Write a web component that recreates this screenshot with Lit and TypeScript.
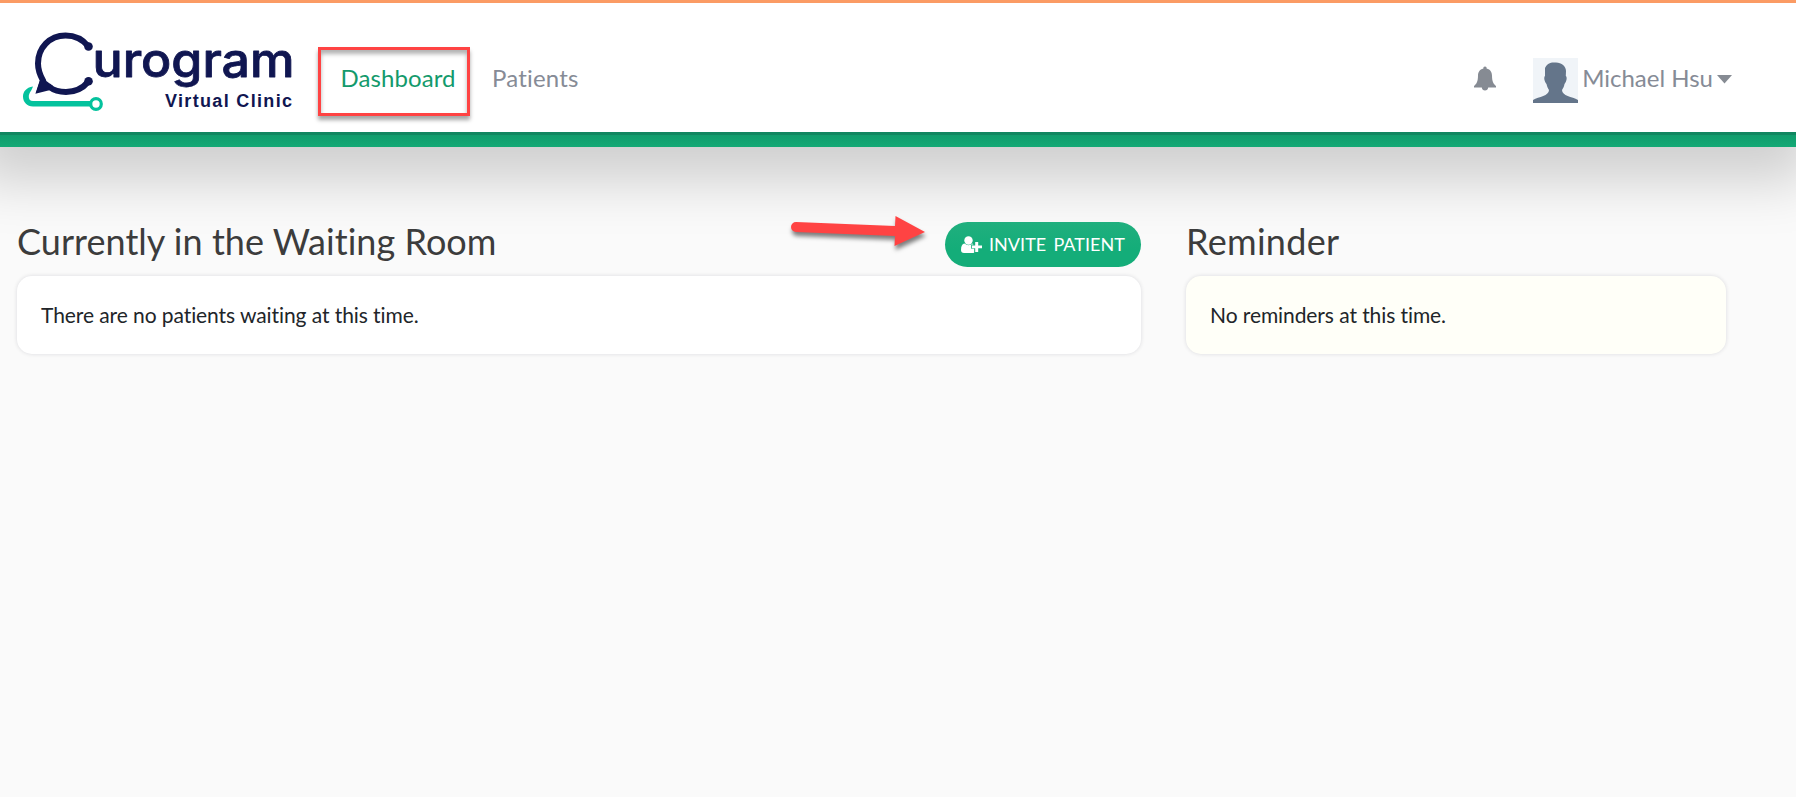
import { LitElement, css, html, svg } from "lit";
import { customElement, property } from "lit/decorators.js";

const logo = svg`
  <svg class="logo" width="280" height="90" viewBox="16 26 280 90">
    <path
      d="M88.500 46.500 C82.500 39 74 35.500 65.500 35.500 C49.500 35.500 38 48 38 63.500 C38 70.500 40.500 76 43 80.500 L40 89.500 L49.500 87 C54 90.500 60 92 66 92 C75 92 83 88 88.500 81.500"
      class="bubble"
    />
    <circle cx="88.500" cy="46.500" r="4.300" class="navy" />
    <circle cx="88.500" cy="81.300" r="4.300" class="navy" />
    <path d="M36 93 L41 77 L53 86 Z" class="navy" />
    <path
      d="M33 86.500 C26 87.500 23 92 23 96.500 C23 102 27 106.500 33 106.500 H90 V101 H33 C30 101 28.500 99 28.800 96 C29 93 31.500 91 33 86.500 Z"
      class="mint"
    />
    <circle cx="96" cy="104" r="5.300" class="ring" />
    <text x="92.500" y="77.300" textLength="202" lengthAdjust="spacingAndGlyphs" class="word">urogram</text>
    <text x="165" y="106.500" textLength="127" class="sub">Virtual Clinic</text>
  </svg>
`;

@customElement("message-card")
export class MessageCard extends LitElement {
  @property() text = "";

  static styles = css`
    :host {
      display: flex;
      align-items: center;
      box-sizing: border-box;
      height: 78px;
      padding: 0 24px 2px;
      border-radius: 15px;
      background: var(--card-background, #fff);
      box-shadow: 0 0 4px rgba(0, 0, 40, 0.13);
      color: #212529;
      font-size: 21px;
      letter-spacing: -0.08px;
    }
  `;

  render() {
    return html`<span>${this.text}</span>`;
  }
}

@customElement("app-root")
export class AppRoot extends LitElement {
  static styles = css`
    :host {
      display: block;
      height: 797px;
      overflow: hidden;
      position: relative;
      background: #fafafa;
      font-family: Lato, sans-serif;
      font-variant-ligatures: none;
      color: #3c3c3c;
    }

    .header {
      box-sizing: border-box;
      position: relative;
      height: 147px;
      border-top: 3px solid #fb9b64;
      background: #fff;
      display: flex;
      flex-direction: column;
      box-shadow: -6px 15px 50px 20px rgba(0, 0, 0, 0.17);
    }

    .bar {
      flex: 1;
      display: flex;
      align-items: flex-start;
      padding: 0 64px 0 16px;
      font-size: 24px;
      line-height: 30px;
      color: #868b96;
    }

    .strip {
      box-sizing: border-box;
      height: 15px;
      border-top: 3px solid #118660;
      background: linear-gradient(#119c6c, #13a975);
    }

    .logo {
      display: block;
      flex: none;
      margin-top: 23px;
    }

    .bubble {
      fill: none;
      stroke: #101651;
      stroke-width: 6;
    }

    .navy {
      fill: #101651;
    }

    .mint {
      fill: #04c29d;
    }

    .ring {
      fill: none;
      stroke: #04c29d;
      stroke-width: 3.2;
    }

    .word {
      font: 500 47px Inter, sans-serif;
      fill: #101651;
      stroke: #101651;
      stroke-width: 0.8;
      stroke-linejoin: round;
    }

    .sub {
      font: bold 18px "Liberation Sans", sans-serif;
      fill: #101651;
    }

    .nav {
      display: flex;
      align-items: flex-start;
    }

    .highlight {
      box-sizing: border-box;
      width: 152px;
      height: 69px;
      margin: 44px 0 0 22px;
      border: 3px solid #ff4343;
      box-shadow:
        0 4px 4px rgba(0, 0, 0, 0.35),
        inset 0 4px 4px rgba(0, 0, 0, 0.3);
      display: flex;
      justify-content: center;
      padding: 13px 0 0 8px;
    }

    .active {
      color: #139a6c;
      letter-spacing: 0.1px;
    }

    .patients {
      margin: 60px 0 0 22px;
      letter-spacing: 0.2px;
    }

    .account {
      display: flex;
      align-items: flex-start;
      margin: 55px 0 0 auto;
    }

    .bell {
      margin: 8px 36px 0 0;
    }

    .avatar {
      margin-right: 4px;
    }

    .name {
      margin-top: 5px;
    }

    .caret {
      margin: 17px 0 0 4px;
    }

    .content {
      position: relative;
      display: grid;
      grid-template-columns: 1124px 540px;
      column-gap: 45px;
      padding: 75px 0 0 17px;
    }

    .heading {
      display: flex;
      align-items: center;
      justify-content: space-between;
      height: 45px;
      margin-bottom: 9px;
    }

    h2 {
      margin: 0 0 8px;
      font-size: 36px;
      font-weight: 400;
      line-height: 40px;
      letter-spacing: 0.04px;
    }

    .invite {
      box-sizing: border-box;
      display: flex;
      align-items: center;
      gap: 6px;
      width: 196px;
      height: 45px;
      padding: 0 0 1px 16px;
      border: 0;
      border-radius: 23px;
      background: linear-gradient(#20af7e, #14ad79 60%);
      color: #fff;
      font: 400 18px Lato, sans-serif;
      letter-spacing: 0.04px;
      word-spacing: 2.5px;
      white-space: nowrap;
    }

    .reminders {
      --card-background: #fffff8;
    }

    .reminders h2 {
      letter-spacing: 0.3px;
    }

    .arrow {
      position: absolute;
      left: 784px;
      top: 208px;
      filter: drop-shadow(1px 4px 2px rgba(0, 0, 0, 0.5));
    }
  `;

  render() {
    return html`
      <header class="header">
        <div class="bar">
          ${logo}
          <nav class="nav">
            <div class="highlight"><span class="active">Dashboard</span></div>
            <span class="patients">Patients</span>
          </nav>
          <div class="account">
            <svg class="bell" width="24" height="26" viewBox="0 0 24 26">
              <path
                d="M12 0.500 C13.200 0.500 13.800 1.300 13.600 2.500 C17.500 3.500 19 6.500 19 9.500 C19 15.500 20.500 18 23 20 V21.500 H1 V20 C3.500 18 5 15.500 5 9.500 C5 6.500 6.500 3.500 10.400 2.500 C10.200 1.300 10.800 0.500 12 0.500 Z M8.800 21.500 H15.200 C15 23.500 13.800 24.500 12 24.500 S9 23.500 8.800 21.500 Z"
                fill="#868b93"
              />
            </svg>
            <svg class="avatar" width="45" height="45" viewBox="0 0 45 45">
              <rect width="45" height="45" fill="#f0f4f8" />
              <path
                d="M12 10 C14 5.500 18 4 22 4.500 C28 4 33 8 33 13 L32.800 18 C34.500 19 33.500 24 31.500 26 C31 29 30 30.500 29 32 C29 38 39 38.500 45 42 V45 H0 V42 C6 38.500 16 38 16 32 C14.500 30 14 28 13.500 26 C11.500 24 10.500 19 12 18 Z"
                fill="#64758a"
              />
            </svg>
            <span class="name">Michael Hsu</span>
            <svg class="caret" width="15" height="9" viewBox="0 0 15 9">
              <path d="M0 0 H15 L7.500 8.500 Z" fill="#868b93" />
            </svg>
          </div>
        </div>
        <div class="strip"></div>
      </header>
      <main class="content">
        <section>
          <div class="heading">
            <h2>Currently in the Waiting Room</h2>
            <button class="invite">
              <svg width="22" height="17" viewBox="0 0 22 17" fill="#fff">
                <circle cx="7.500" cy="4.500" r="4.200" />
                <path
                  d="M3.500 7.500 Q7.500 11 11.500 7.500 L12.500 8.500 H10.200 V12.800 H13.200 V16.500 Q12.500 17 12 17 H3 Q0 17 0 14 Q0 8 3.500 7.500 Z M14.200 6 H17.200 V9.500 H21 V12.200 H17.200 V16 H14.200 V12.200 H11 V9.500 H14.200 Z"
                />
              </svg>
              INVITE PATIENT
            </button>
          </div>
          <message-card text="There are no patients waiting at this time."></message-card>
        </section>
        <section class="reminders">
          <div class="heading"><h2>Reminder</h2></div>
          <message-card text="No reminders at this time."></message-card>
        </section>
      </main>
      <svg class="arrow" width="144" height="44" viewBox="784 208 144 44">
        <path
          d="M796 222 L895 226 L895.500 216 L925 232 L894.500 246 L895 236 L796 232 A5 5 0 0 1 796 222 Z"
          fill="#ff4343"
        />
      </svg>
    `;
  }
}
